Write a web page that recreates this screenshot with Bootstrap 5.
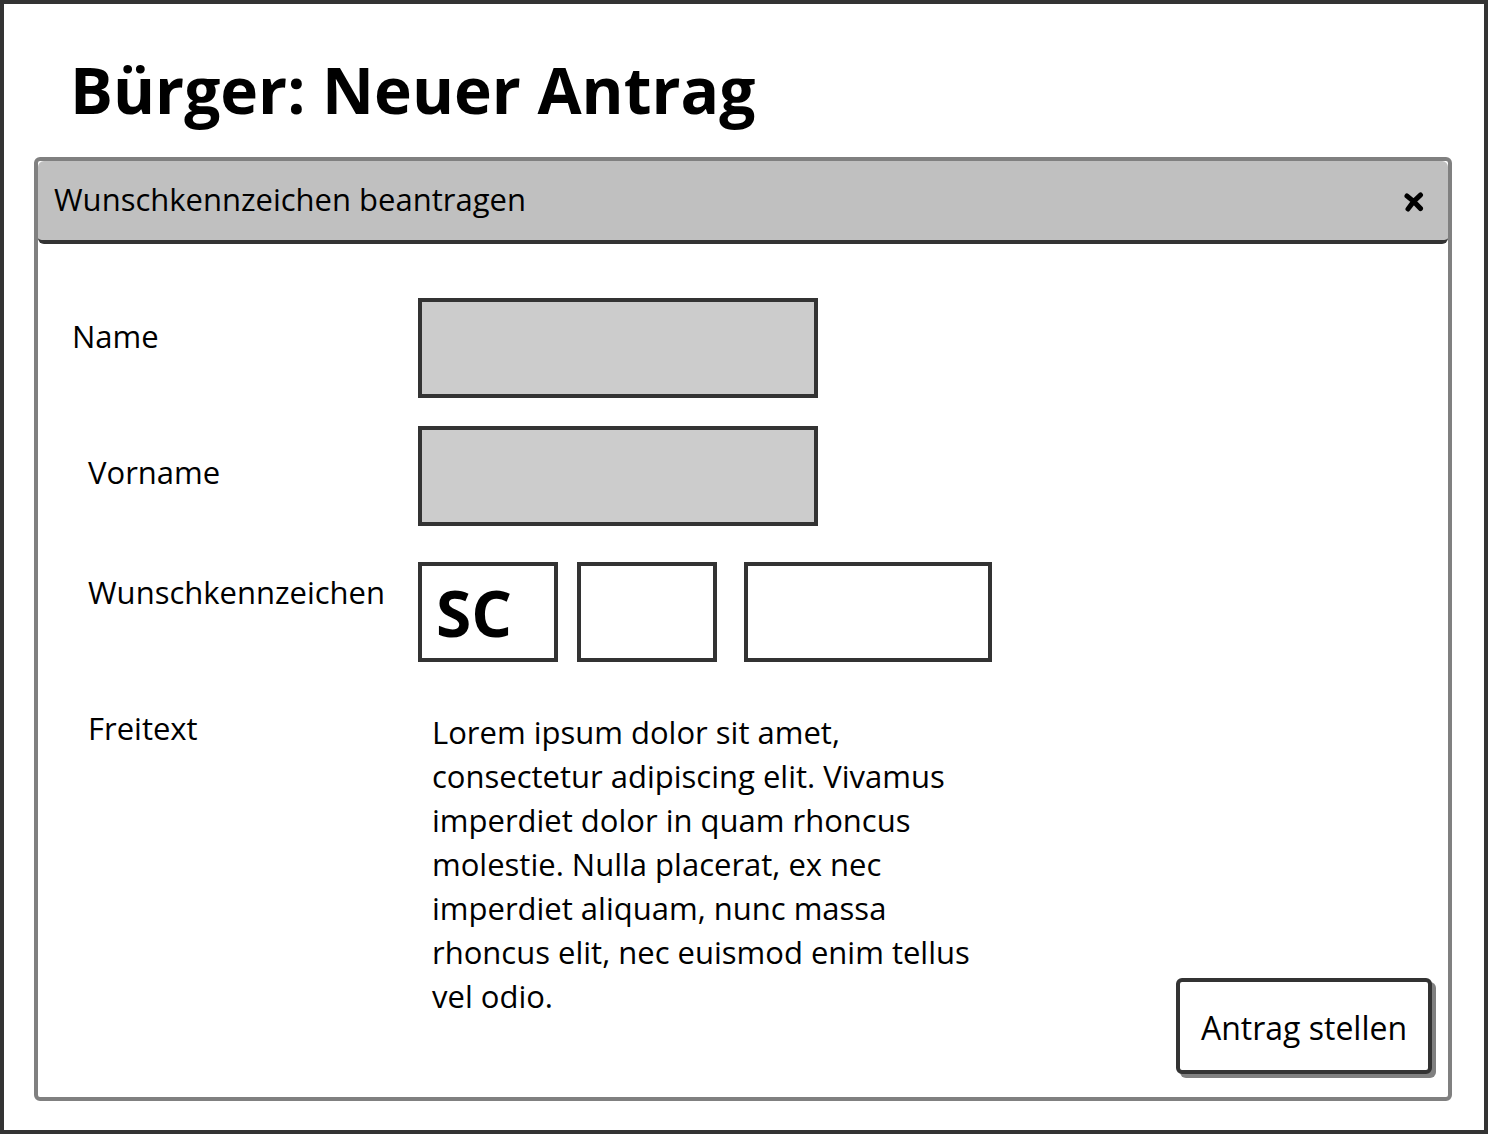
<!DOCTYPE html>
<html lang="de">
<head>
<meta charset="utf-8">
<meta name="viewport" content="width=device-width, initial-scale=1">
<title>Bürger: Neuer Antrag</title>
<link href="https://cdn.jsdelivr.net/npm/bootstrap@5.3.0/dist/css/bootstrap.min.css" rel="stylesheet">
<style>
  body { font-family: "Open Sans", sans-serif; font-size: 31px; line-height: 44px; color: #000; }
  .sheet { border: 4px solid #333; padding: 42px 32px 29px 30px; background: #fff; }
  .page-title { font-size: 64px; line-height: 88px; font-weight: 700; margin: 0 0 23px; padding-left: 36px; color: #000; }
  .dialog { border: 4px solid #808080; border-radius: 6px; background: #fff; }
  .dialog-head { background: #c0c0c0; border-bottom: 4px solid #333; border-radius: 6px; padding: 16px 24px 19px 16px; }
  .dialog-title { font-size: 31px; line-height: 44px; font-weight: 400; margin: 0; color: #000; }
  .close-x { border: 0; background: none; padding: 6px 0 0; line-height: 0; }
  .dialog-form { padding: 54px 16px 23px 34px; }
  .form-line { margin-bottom: 28px; }
  .line-wide { margin-bottom: 36px; }
  .line-last { margin-bottom: 44px; }
  .label-col { flex: 0 0 346px; }
  .field { height: 100px; border: 4px solid #333; border-radius: 0; padding: 0 14px; font-size: 31px; color: #000; }
  .field:disabled { background: #ccc; }
  .field-name { width: 400px; }
  .field-code { width: 140px; font-size: 64px; font-weight: 700; }
  .field-number { width: 248px; }
  .plate { gap: 19px; }
  .free-text { width: 590px; height: 320px; border: 0; border-radius: 0; padding: 4px 14px; font-size: 31px; line-height: 44px; color: #000; resize: none; overflow: hidden; }
  .send { border: 4px solid #333; border-radius: 6px; box-shadow: 4px 4px 0 #808080; background: #fff; padding: 24px 16px 20px; min-width: 256px; font-size: 32px; line-height: 44px; color: #000; }
</style>
<script src="https://cdn.jsdelivr.net/npm/bootstrap@5.3.0/dist/js/bootstrap.bundle.min.js" defer></script>
</head>
<body>
<main class="sheet min-vh-100 d-flex flex-column">
  <h1 class="page-title">Bürger: Neuer Antrag</h1>
  <section class="dialog flex-grow-1 d-flex flex-column" aria-labelledby="dialog-title">
    <header class="dialog-head d-flex align-items-center justify-content-between">
      <h2 class="dialog-title" id="dialog-title">Wunschkennzeichen beantragen</h2>
      <button class="close-x" type="button" aria-label="Schließen">
        <svg width="20" height="20" viewBox="0 0 20 20" fill="none" stroke="#000" stroke-width="5" stroke-linecap="round"><path d="M3 4Q10 9 16.500 16.500M16.500 3Q9 9 4 17"/></svg>
      </button>
    </header>
    <form class="dialog-form flex-grow-1 d-flex flex-column">
      <div class="form-line d-flex">
        <label class="label-col pt-3" for="name">Name</label>
        <input class="field field-name form-control" id="name" type="text" disabled>
      </div>
      <div class="form-line line-wide d-flex">
        <label class="label-col ps-3 pt-4" for="vorname">Vorname</label>
        <input class="field field-name form-control" id="vorname" type="text" disabled>
      </div>
      <div class="form-line line-last d-flex">
        <label class="label-col ps-3 pt-2" for="kreis">Wunschkennzeichen</label>
        <div class="plate d-flex">
          <input class="field field-code form-control" id="kreis" type="text" value="SC">
          <input class="field field-code form-control me-2" type="text" aria-label="Buchstaben">
          <input class="field field-number form-control" type="text" aria-label="Ziffern">
        </div>
      </div>
      <div class="d-flex flex-grow-1">
        <label class="label-col ps-3" for="freitext">Freitext</label>
        <textarea class="free-text form-control" id="freitext">Lorem ipsum dolor sit amet, consectetur adipiscing elit. Vivamus imperdiet dolor in quam rhoncus molestie. Nulla placerat, ex nec imperdiet aliquam, nunc massa rhoncus elit, nec euismod enim tellus vel odio.</textarea>
        <button class="send btn ms-auto align-self-end text-nowrap" type="submit">Antrag stellen</button>
      </div>
    </form>
  </section>
</main>
</body>
</html>
